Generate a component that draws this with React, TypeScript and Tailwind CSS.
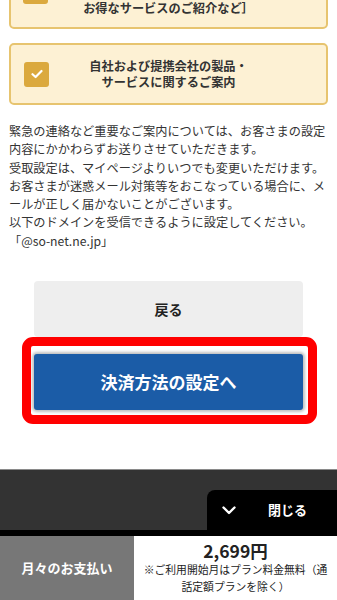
import React from 'react';

const font = { fontFamily: '"Noto Sans CJK JP", "Noto Sans", sans-serif' };

const CheckBox = ({ className = '' }: { className?: string }) => (
  <div className={`w-[25px] h-[25px] shrink-0 rounded-[3px] bg-[#dba93e] flex items-center justify-center ${className}`}>
    <svg width="12" height="10" viewBox="0 0 12 10" fill="none">
      <path d="M1.5 5.2 L4.6 8 L10.5 2" stroke="white" strokeWidth="2.2" strokeLinecap="round" strokeLinejoin="round" />
    </svg>
  </div>
);

const notice = [
  '緊急の連絡など重要なご案内については、お客さまの設定',
  '内容にかかわらずお送りさせていただきます。',
  '受取設定は、マイページよりいつでも変更いただけます。',
  'お客さまが迷惑メール対策等をおこなっている場合に、メ',
  'ールが正しく届かないことがございます。',
  '以下のドメインを受信できるように設定してください。',
  '「@so-net.ne.jp」',
];

export default function App() {
  return (
    <div className="w-[337px] h-[600px] overflow-hidden bg-white flex flex-col" style={font}>
      <div className="px-[9px]">
        {/* first option, scrolled mostly out of view */}
        <div className="-mt-[48px] h-[77px] flex items-start px-[12px] rounded-[5px] border-2 border-[#e7c46f] bg-[#fdf1d4]">
          <CheckBox className="mt-[25px]" />
          <div className="flex-1 mr-[25px] mt-[46px] text-center text-[12.2px] leading-[16px] font-bold text-[#333]">
            お得なサービスのご紹介など］
          </div>
        </div>

        <div className="mt-[14px] flex items-center px-[13px] py-[13px] rounded-[5px] border-2 border-[#e7c46f] bg-[#fdf1d4]">
          <CheckBox />
          <div className="flex-1 mr-[25px] text-center text-[12.2px] leading-[16px] font-bold text-[#333]">
            <p>自社および提携会社の製品・</p>
            <p>サービスに関するご案内</p>
          </div>
        </div>

        <div className="mt-[17px] text-[12.2px] leading-[18.3px] text-[#333] whitespace-nowrap">
          {notice.map((l) => (
            <div key={l}>{l}</div>
          ))}
        </div>
      </div>

      <div className="mx-[34px] mt-[31px] flex flex-col gap-[17px]">
        <button className="h-[56px] rounded-[4px] bg-[#eeeeee] text-[14px] font-bold text-[#222]">戻る</button>
        <div className="relative">
          <button className="w-full h-[56px] rounded-[3px] bg-[#1b5ca7] text-[17px] font-bold text-white shadow-[0_0_3px_2px_rgba(0,0,0,0.25)]">
            決済方法の設定へ
          </button>
          <div className="absolute -left-[12px] -right-[14px] -top-[17px] -bottom-[14px] rounded-[11px] border-[9px] border-[#ff0000] pointer-events-none" />
        </div>
      </div>

      <div className="flex-1" />

      <div className="h-[61px] border-t border-[#8a8a8a] bg-[#333333] flex items-end justify-end">
        <div className="w-[130px] h-[40px] bg-black rounded-tl-[8px] flex items-center">
          <svg className="ml-[15px]" width="14" height="9" viewBox="0 0 14 9" fill="none">
            <path d="M1.5 1.5 L7 7 L12.5 1.5" stroke="white" strokeWidth="2.4" strokeLinecap="round" strokeLinejoin="round" />
          </svg>
          <span className="ml-[32px] text-[13px] font-bold text-white">閉じる</span>
        </div>
      </div>
      <div className="h-[6px] bg-black" />
      <div className="h-[64px] flex">
        <div className="w-[134px] bg-[#777777] flex items-center justify-center text-[13px] font-bold text-white">
          月々のお支払い
        </div>
        <div className="flex-1 flex flex-col items-center justify-center text-[#222]">
          <div className="text-[17.5px] font-bold leading-[20px]">2,699円</div>
          <div className="text-[10.8px] leading-[17px] text-center">
            ※ご利用開始月はプラン料金無料（通
            <br />
            話定額プランを除く）
          </div>
        </div>
      </div>
    </div>
  );
}
